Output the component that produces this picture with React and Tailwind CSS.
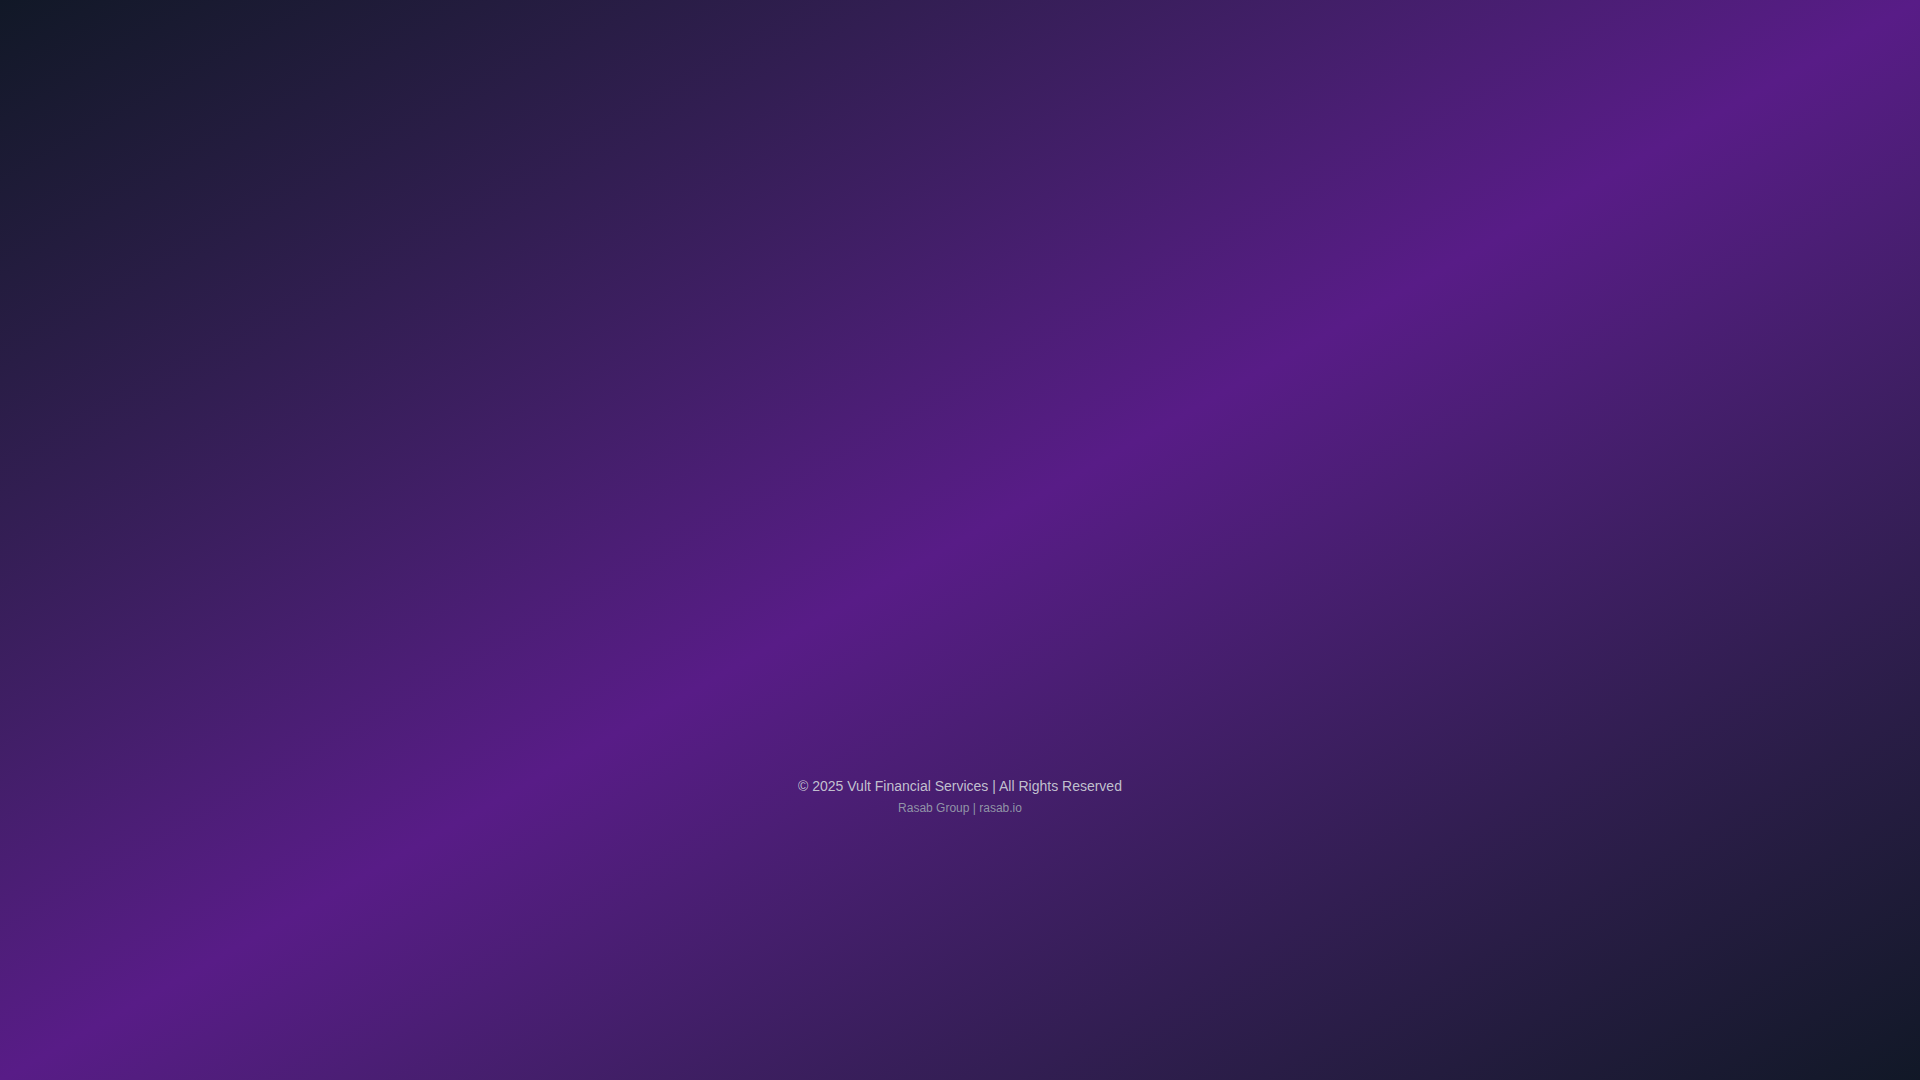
export default function App() {
  return (
    <div
      className="min-h-screen w-full bg-gradient-to-br from-[#111827] via-[#581c87] to-[#111827] flex flex-col items-center justify-center"
      style={{ fontFamily: '"Liberation Sans", Arial, sans-serif' }}
    >
      {/* main content area (empty while loading) */}
      <div className="h-[512px] w-full" />

      <footer className="text-center">
        <p className="text-sm leading-5 text-[#d1d5db]/90">
          © 2025 Vult Financial Services | All Rights Reserved
        </p>
        <p className="mt-1 text-xs leading-4 text-[#9ca3af]/90">Rasab Group | rasab.io</p>
      </footer>
    </div>
  );
}
